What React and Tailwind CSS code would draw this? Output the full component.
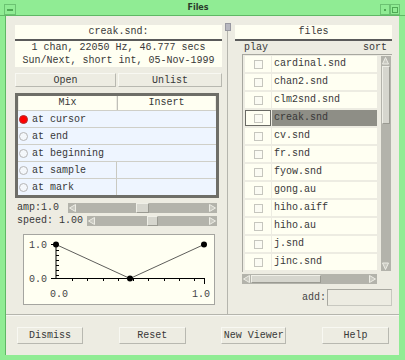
import React from "react";

const files = [
    "cardinal.snd", "chan2.snd", "clm2snd.snd", "creak.snd", "cv.snd", "fr.snd",
    "fyow.snd", "gong.au", "hiho.aiff", "hiho.au", "j.snd", "jinc.snd",
];

const mixRows = [
    { label: "at cursor", on: true, split: false },
    { label: "at end", on: false, split: false },
    { label: "at beginning", on: false, split: false },
    { label: "at sample", on: false, split: true },
    { label: "at mark", on: false, split: true },
];

const Arrow = ({ dir }) => (
    <svg width="9" height="10" viewBox="0 0 9 10" className="shrink-0">
        {dir === "left" && <polygon points="7.5,1.5 1.5,5 7.5,8.5" fill="#c9c9c1" stroke="#ededE5" strokeWidth="1" />}
        {dir === "right" && <polygon points="1.5,1.5 7.5,5 1.5,8.5" fill="#c9c9c1" stroke="#ededE5" strokeWidth="1" />}
        {dir === "up" && <polygon points="1.5,8 4.5,1.5 7.5,8" fill="#c9c9c1" stroke="#ededE5" strokeWidth="1" />}
        {dir === "down" && <polygon points="1.5,2 4.5,8.5 7.5,2" fill="#c9c9c1" stroke="#ededE5" strokeWidth="1" />}
    </svg>
);

const Slider = ({ before, thumb }) => (
    <div className="flex flex-1 h-[10px] bg-[#b3b3ab] items-center">
        <Arrow dir="left" />
        <div style={{ width: before }} className="h-full" />
        <div style={{ width: thumb }} className="h-full bg-[#d6d6ce] border-t border-l border-[#efefe7] border-r border-b border-r-[#9a9a92] border-b-[#9a9a92]" />
        <div className="flex-1" />
        <Arrow dir="right" />
    </div>
);

const Button = ({ children, className }) => (
    <div className={"flex items-center justify-center bg-[#edece2] border border-t-[#f8f8f2] border-l-[#f8f8f2] border-r-[#b8b8b0] border-b-[#b8b8b0] " + (className || "")}>
        {children}
    </div>
);

const Envelope = () => {
    const yTicks = [15, 20, 25, 30, 35, 40];
    const xTicks = [48, 63, 79, 94, 109, 124, 140, 155, 170];
    return (
        <svg width="190" height="69" viewBox="0 0 190 69">
            <text x="5" y="13" fontSize="10" fill="#444" fontFamily="Liberation Mono, monospace">1.0</text>
            <text x="5" y="47" fontSize="10" fill="#444" fontFamily="Liberation Mono, monospace">0.0</text>
            <text x="26" y="62" fontSize="10" fill="#444" fontFamily="Liberation Mono, monospace">0.0</text>
            <text x="168" y="62" fontSize="10" fill="#444" fontFamily="Liberation Mono, monospace">1.0</text>
            <line x1="32" y1="9" x2="32" y2="43" stroke="#000" strokeWidth="1" />
            <line x1="27" y1="9.5" x2="32" y2="9.5" stroke="#000" strokeWidth="1" />
            <line x1="27" y1="43.5" x2="32" y2="43.5" stroke="#000" strokeWidth="1" />
            {yTicks.map((y) => (
                <line key={y} x1="32" y1={y + 0.5} x2="35" y2={y + 0.5} stroke="#000" strokeWidth="1" />
            ))}
            <line x1="32" y1="43.5" x2="181" y2="43.5" stroke="#000" strokeWidth="1" />
            {xTicks.map((x) => (
                <line key={x} x1={x + 0.5} y1="43" x2={x + 0.5} y2="46" stroke="#000" strokeWidth="1" />
            ))}
            <line x1="180.5" y1="43" x2="180.5" y2="49" stroke="#000" strokeWidth="1" />
            <polyline points="32,9.5 106,43.5 180,9.5" fill="none" stroke="#333" strokeWidth="0.8" />
            <circle cx="32" cy="9.5" r="3" fill="#000" />
            <circle cx="106" cy="43.5" r="3" fill="#000" />
            <circle cx="180" cy="9.5" r="3" fill="#000" />
        </svg>
    );
};

const App = () => {
    return (
        <div className="w-[405px] h-[360px] bg-[#90ec94] flex flex-col font-['Liberation_Mono',monospace] text-[10px] text-[#383838] overflow-hidden">
            {/* title bar */}
            <div className="h-[16px] shrink-0 flex items-end border-b border-[#5fb865]">
                <div className="w-[12px] h-[11px] ml-[4px] border border-[#6cc272] flex items-center justify-center">
                    <div className="w-[6px] h-[2px] bg-[#4fa855]" />
                </div>
                <div className="flex-1 text-center font-['DejaVu_Sans',sans-serif] font-bold text-[8px] leading-[12px] text-[#2b3b2b] self-center pt-[1px]">Files</div>
                <div className="w-[10px] h-[11px] border border-[#6cc272] flex items-center justify-center">
                    <div className="w-[2px] h-[2px] bg-[#4fa855]" />
                </div>
                <div className="w-[10px] h-[11px] mr-[5px] border border-[#6cc272] flex items-center justify-center">
                    <div className="w-[6px] h-[6px] border border-[#4fa855]" />
                </div>
            </div>

            <div className="flex-1 flex ml-[5px] mr-[6px] mb-[5px] border-l border-[#5fb865] bg-[#edece2] flex-col">
                <div className="flex h-[299px] border-b border-[#b5b5ad]">
                    {/* left pane */}
                    <div className="w-[218px] flex flex-col pl-[9px] pr-[2px] pt-[9px]">
                        <div className="h-[14px] bg-[#fffff2] text-center leading-[14px]">creak.snd:</div>
                        <div className="h-[2px] bg-[#5a5a5a]" />
                        <div className="h-[26px] bg-[#fffff2] text-center leading-[13px]">
                            <div>1 chan, 22050 Hz, 46.777 secs</div>
                            <div>Sun/Next, short int, 05-Nov-1999</div>
                        </div>
                        <div className="flex gap-[2px] mt-[6px] h-[14px]">
                            <Button className="w-[101px]">Open</Button>
                            <Button className="flex-1">Unlist</Button>
                        </div>
                        <div className="mt-[6px] w-[204px] border-[3px] border-[#6e6e68] bg-[#cfcfc8] flex flex-col gap-[1px]">
                            <div className="flex h-[14px] gap-[1px] bg-[#edece2] pl-[1px] pr-[1px]">
                                <div className="w-[98px] bg-[#fffff2] text-center leading-[14px]">Mix</div>
                                <div className="w-[99px] border-l border-[#c0c0b8] bg-[#fffff2] text-center leading-[14px]">Insert</div>
                            </div>
                            {mixRows.map((r) => (
                                <div key={r.label} className="flex h-[16px] bg-[#eef5ff] items-center">
                                    <div className={"flex items-center h-full " + (r.split ? "w-[99px] border-r border-[#c9c9c1]" : "flex-1")}>
                                        <div className={"w-[9px] h-[9px] rounded-full ml-[1px] mr-[4px] " + (r.on ? "bg-[#ff0000] border border-[#b03030]" : "border border-[#b5b5b5] bg-[#f4f7fb]")} />
                                        <span>{r.label}</span>
                                    </div>
                                    {r.split && <div className="flex-1" />}
                                </div>
                            ))}
                        </div>
                        <div className="flex items-center mt-[5px] h-[10px] pl-[2px] pr-[5px]">
                            <span className="w-[51px] leading-[10px]">amp:1.0</span>
                            <Slider before={59} thumb={13} />
                        </div>
                        <div className="flex items-center mt-[3px] h-[10px] pl-[2px] pr-[5px]">
                            <span className="w-[70px] leading-[10px]">speed: 1.00</span>
                            <Slider before={51} thumb={11} />
                        </div>
                        <div className="mt-[8px] ml-[8px] w-[192px] h-[71px] bg-[#fffff2] border border-[#a5a5a0]">
                            <Envelope />
                        </div>
                    </div>

                    {/* sash */}
                    <div className="w-[7px] flex flex-col items-center pt-[7px]">
                        <div className="w-[6px] h-[8px] bg-[#b8b8c0] border border-[#9898a0]" />
                        <div className="w-[1px] flex-1 bg-[#b5b5ad]" />
                    </div>

                    {/* right pane */}
                    <div className="flex-1 flex flex-col pl-[4px] pr-[7px] pt-[9px]">
                        <div className="h-[14px] bg-[#fffff2] text-center leading-[14px]">files</div>
                        <div className="h-[2px] bg-[#5a5a5a]" />
                        <div className="flex justify-between h-[13px] pl-[9px] pr-[5px] leading-[13px]">
                            <span>play</span>
                            <span>sort</span>
                        </div>
                        <div className="ml-[7px] h-[218px] flex border-l border-t border-[#a8a8a0] pt-[1px]">
                            <div className="flex flex-col gap-[2px] pl-[2px] w-[134px]">
                                {files.map((f) => {
                                    const sel = f === "creak.snd";
                                    return (
                                        <div key={f} className="flex gap-[1px] h-[16px]">
                                            <div className={"w-[26px] flex items-center justify-center bg-[#fffff2] " + (sel ? "border border-[#6a6a64]" : "")}>
                                                <div className="w-[9px] h-[9px] border border-[#c6c6be] bg-[#fbfbf3]" />
                                            </div>
                                            <div className={"flex-1 leading-[16px] pl-[2px] " + (sel ? "bg-[#8e8e86]" : "bg-[#fffff2]")}>{f}</div>
                                        </div>
                                    );
                                })}
                            </div>
                            <div className="ml-[4px] w-[10px] h-[215px] bg-[#b3b3ab] flex flex-col">
                                <Arrow dir="up" />
                                <div className="h-[58px] mx-[1px] bg-[#d6d6ce] border border-[#efefe7] border-r-[#9a9a92] border-b-[#9a9a92]" />
                                <div className="flex-1" />
                                <Arrow dir="down" />
                            </div>
                        </div>
                        <div className="ml-[7px] mt-[2px] w-[135px] h-[10px] bg-[#b3b3ab] flex">
                            <Arrow dir="left" />
                            <div className="w-[70px] my-[1px] bg-[#d6d6ce] border border-[#efefe7] border-r-[#9a9a92] border-b-[#9a9a92]" />
                            <div className="flex-1" />
                            <Arrow dir="right" />
                        </div>
                        <div className="flex items-center mt-[5px] h-[17px]">
                            <span className="ml-[67px] w-[25px] text-[#444]">add:</span>
                            <div className="flex-1 h-full border border-[#c8c8c0] border-t-[#a8a8a0] border-l-[#a8a8a0] bg-[#edece2]" />
                        </div>
                    </div>
                </div>

                {/* bottom buttons */}
                <div className="flex-1 flex items-center justify-between pl-[11px] pr-[10px] pb-[1px] border-t border-[#f8f8f2]">
                    <Button className="w-[66px] h-[17px]">Dismiss</Button>
                    <Button className="w-[67px] h-[17px]">Reset</Button>
                    <Button className="w-[65px] h-[17px]">New Viewer</Button>
                    <Button className="w-[67px] h-[17px]">Help</Button>
                </div>
            </div>
        </div>
    );
};

export default App;
